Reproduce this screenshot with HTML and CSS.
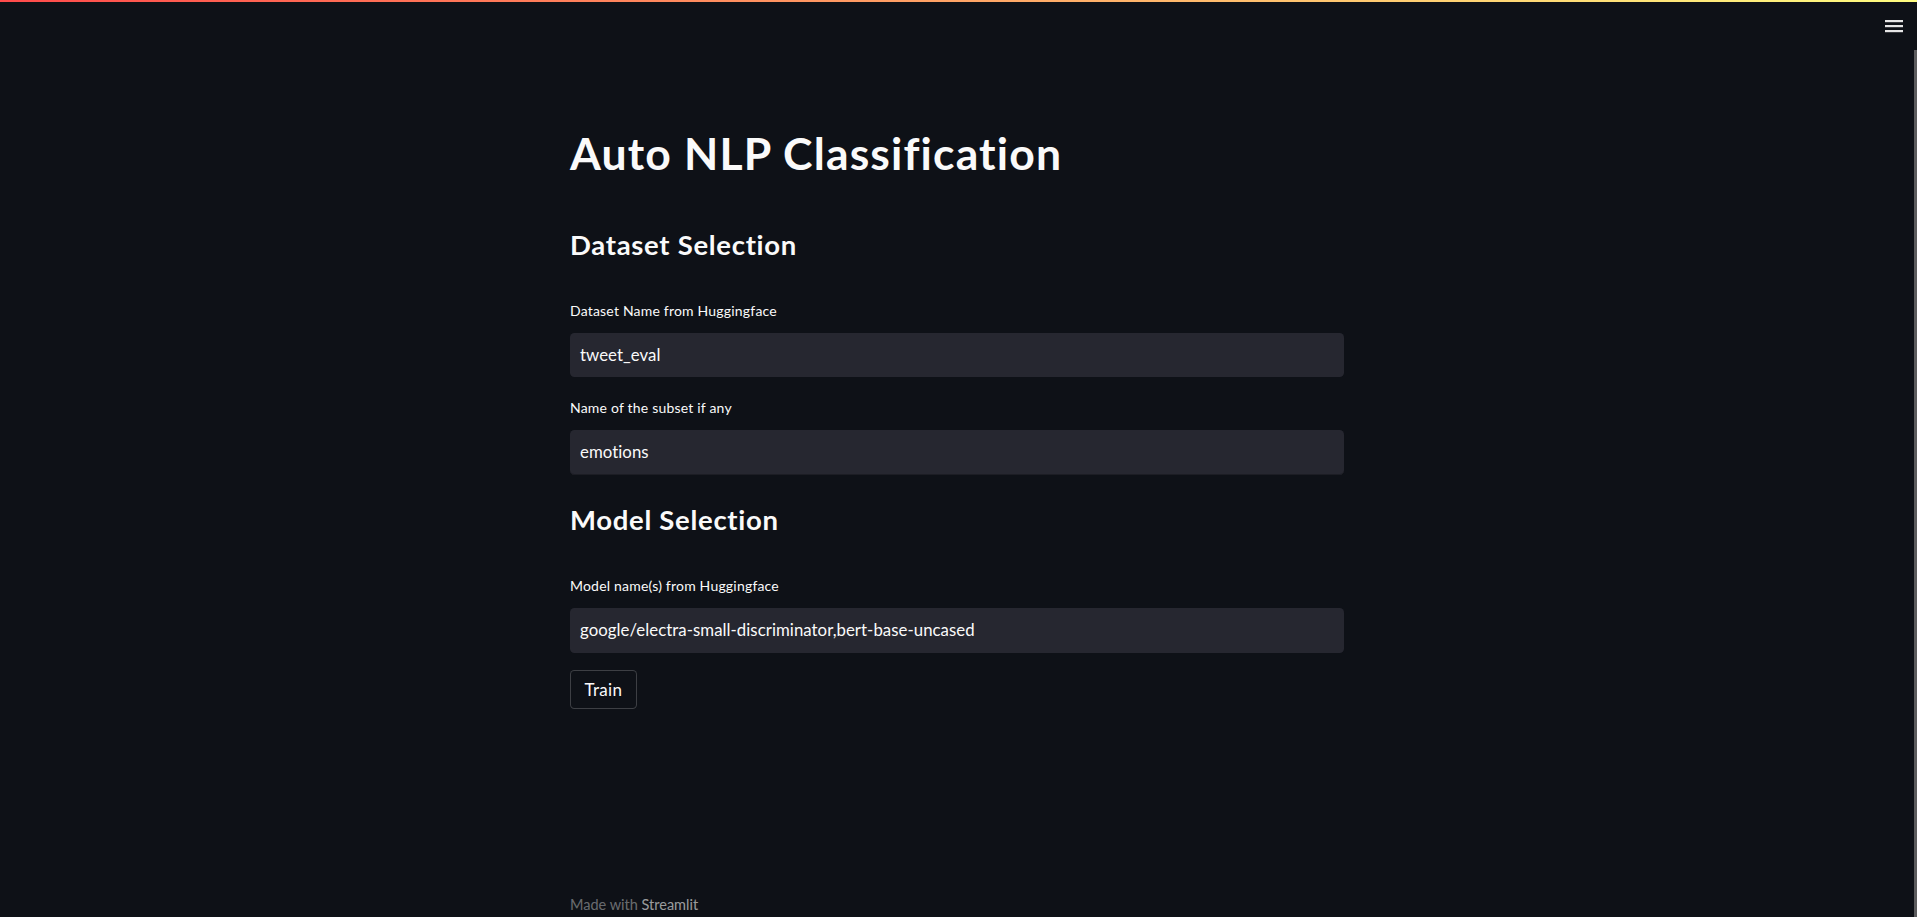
FILE: index.html
```html
<!DOCTYPE html>
<html lang="en">
<head>
<meta charset="utf-8">
<title>Auto NLP Classification</title>
<link rel="stylesheet" href="styles.css">
</head>
<body>
<div class="decoration"></div>
<button class="menu-btn" aria-label="Main menu">
  <svg width="18" height="13" viewBox="0 0 18 13"><rect x="0" y="0" width="18" height="2.2" fill="#e6e6e6"/><rect x="0" y="5" width="18" height="2.2" fill="#e6e6e6"/><rect x="0" y="10" width="18" height="2.2" fill="#e6e6e6"/></svg>
</button>
<div class="app">
  <div class="viewport">
    <main class="block">
      <h1 class="title">Auto NLP Classification</h1>
      <h2 class="section first">Dataset Selection</h2>
      <label class="label l1">Dataset Name from Huggingface</label>
      <div class="input">tweet_eval</div>
      <label class="label l2">Name of the subset if any</label>
      <div class="input last">emotions</div>
      <h2 class="section second">Model Selection</h2>
      <label class="label l1">Model name(s) from Huggingface</label>
      <div class="input">google/electra-small-discriminator,bert-base-uncased</div>
      <button class="btn">Train</button>
    </main>
    <footer class="footer">Made with <span class="brand">Streamlit</span></footer>
  </div>
  <div class="scrollbar"></div>
</div>
</body>
</html>
```

FILE: styles.css
```css
html, body {
  margin: 0;
  padding: 0;
  background: #0e1117;
  height: 100%;
  overflow: hidden;
}
body {
  font-family: Lato, "Liberation Sans", sans-serif;
  font-variant-ligatures: none;
  color: #fafafa;
}
.decoration {
  height: 2px;
  background: linear-gradient(90deg, #ff4b4b, #fffd80);
}
.menu-btn {
  position: absolute;
  top: 20px;
  right: 14px;
  padding: 0;
  border: 0;
  background: transparent;
  line-height: 0;
}
.app {
  display: flex;
  height: 915px;
}
.viewport {
  flex: 1;
  display: flex;
  flex-direction: column;
  align-items: center;
}
.scrollbar {
  width: 3px;
  margin-top: 48px;
  background: #5c5c5e;
}
.block {
  width: 774px;
  display: flex;
  flex-direction: column;
  align-items: flex-start;
  padding-top: 124px;
}
.title {
  margin: 0;
  font-size: 44.5px;
  line-height: 1.2;
  font-weight: 700;
  letter-spacing: 1.15px;
}
.section {
  margin: 0;
  font-size: 27.5px;
  line-height: 1.2;
  font-weight: 700;
  letter-spacing: 0.7px;
}
.section.first { margin-top: 48.5px; }
.section.second { margin-top: 28.5px; }
.label {
  font-size: 14px;
  line-height: 1.2;
  font-weight: 400;
  letter-spacing: 0.2px;
  color: #fafafa;
}
.label.l1 { margin-top: 42px; }
.label.l2 { margin-top: 23px; }
.input {
  margin-top: 13px;
  width: 100%;
  box-sizing: border-box;
  height: 44.6px;
  padding: 0 10px;
  background: #262730;
  border-radius: 4.4px;
  font-size: 16.8px;
  line-height: 44.6px;
  letter-spacing: 0.05px;
  color: #fafafa;
}
.input.last {
  box-shadow: inset 0 -1px 0 #1c1d24;
}
.btn {
  margin-top: 17.3px;
  height: 38.7px;
  padding: 0 13.5px;
  background: #0e1117;
  border: 1px solid rgba(250, 250, 250, 0.2);
  border-radius: 4.4px;
  font-family: Lato, "Liberation Sans", sans-serif;
  font-size: 17px;
  letter-spacing: 0.3px;
  color: #fafafa;
}
.footer {
  width: 774px;
  margin-top: auto;
  padding-bottom: 4px;
  font-size: 14.5px;
  line-height: 1.2;
  color: rgba(250, 250, 250, 0.4);
}
.brand {
  color: rgba(250, 250, 250, 0.6);
}
```
